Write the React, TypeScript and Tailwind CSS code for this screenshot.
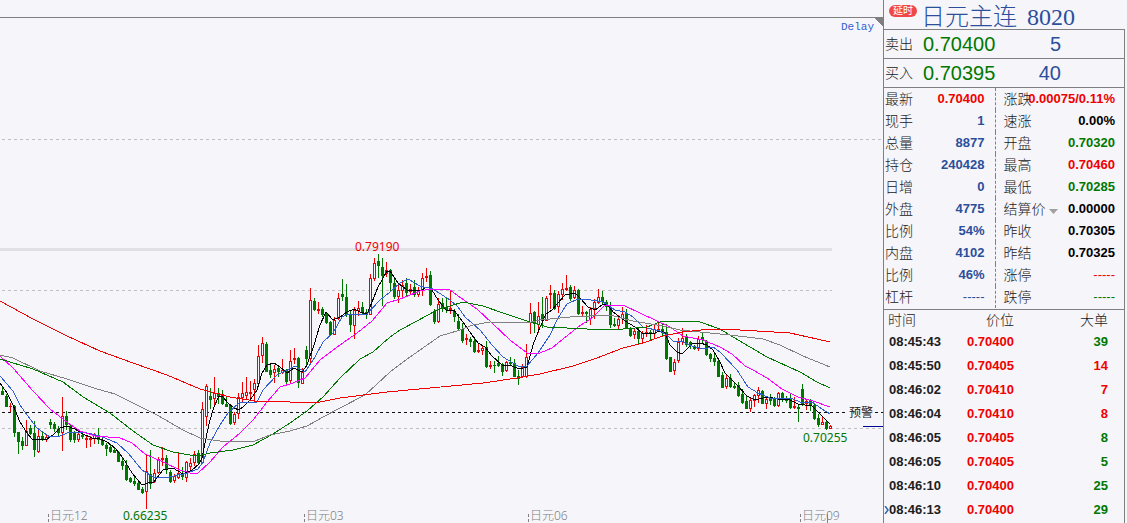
type Point = [number, number]
// x step is implicit: [high, bodyTop, bodyBottom, low, up?]
type Candle = [number, number, number, number, 0 | 1]

const CANDLES: Candle[] = [
  [387, 391, 395, 395, 0], [394, 396, 407, 407, 0], [403, 406, 407, 412, 1], [405, 406, 433, 437, 0],
  [432, 432, 442, 454, 0], [437, 441, 446, 450, 0], [420, 431, 446, 446, 1], [425, 428, 434, 435, 0],
  [421, 433, 450, 457, 0], [430, 436, 452, 453, 1], [432, 436, 439, 441, 0], [434, 437, 440, 442, 1],
  [419, 422, 425, 429, 0], [422, 424, 429, 432, 0], [426, 429, 433, 436, 0], [397, 416, 433, 451, 1],
  [411, 416, 425, 430, 0], [425, 426, 440, 442, 0], [431, 433, 440, 443, 0], [432, 434, 440, 442, 1],
  [433, 435, 437, 439, 0], [435, 438, 440, 448, 1], [436, 438, 440, 447, 1], [433, 435, 439, 444, 1],
  [428, 435, 440, 444, 0], [438, 440, 445, 446, 0], [443, 445, 449, 456, 0], [445, 447, 452, 453, 0],
  [448, 450, 453, 453, 0], [451, 452, 462, 462, 0], [458, 461, 466, 470, 0], [460, 465, 480, 481, 0],
  [477, 478, 482, 483, 0], [475, 481, 484, 486, 0], [481, 483, 490, 490, 0], [487, 489, 493, 494, 0],
  [455, 471, 492, 509, 1], [450, 474, 484, 489, 0], [469, 473, 482, 483, 1], [457, 459, 473, 474, 1],
  [447, 458, 460, 466, 1], [455, 458, 470, 474, 0], [470, 472, 482, 483, 0], [474, 476, 481, 483, 1],
  [452, 473, 478, 479, 1], [467, 473, 477, 480, 0], [461, 462, 478, 482, 1], [458, 463, 467, 472, 1],
  [451, 454, 463, 466, 1], [450, 453, 463, 464, 0], [402, 409, 463, 463, 1], [384, 386, 417, 426, 1],
  [388, 396, 400, 409, 0], [377, 393, 399, 407, 1], [388, 393, 397, 404, 0], [390, 394, 404, 405, 0],
  [397, 404, 407, 407, 0], [404, 405, 424, 425, 0], [412, 414, 423, 425, 1], [393, 397, 414, 419, 1],
  [382, 393, 398, 402, 1], [377, 392, 396, 399, 1], [381, 392, 394, 400, 1], [379, 383, 390, 403, 1],
  [345, 356, 384, 384, 1], [337, 343, 356, 363, 1], [342, 344, 372, 372, 0], [364, 370, 375, 378, 0],
  [365, 369, 373, 383, 1], [365, 368, 372, 377, 0], [359, 370, 373, 374, 1], [369, 370, 382, 384, 0],
  [350, 361, 381, 383, 1], [348, 358, 360, 364, 1], [357, 358, 383, 388, 0], [368, 372, 384, 384, 1],
  [346, 350, 359, 367, 0], [288, 300, 359, 365, 1], [298, 301, 310, 311, 0], [302, 309, 311, 314, 1],
  [307, 309, 315, 317, 0], [312, 314, 323, 324, 0], [321, 322, 335, 335, 0], [317, 320, 335, 335, 1],
  [293, 298, 319, 320, 1], [279, 294, 297, 301, 0], [284, 297, 315, 317, 0], [310, 315, 325, 332, 0],
  [307, 310, 326, 339, 1], [301, 308, 311, 316, 1], [302, 307, 312, 315, 0], [309, 312, 315, 319, 0],
  [274, 278, 315, 315, 1], [258, 263, 279, 281, 1], [254, 261, 266, 278, 0], [258, 267, 276, 306, 0],
  [262, 270, 274, 277, 1], [269, 270, 283, 291, 0], [277, 283, 297, 299, 0], [285, 290, 297, 303, 1],
  [280, 285, 291, 297, 1], [278, 283, 293, 297, 0], [284, 289, 292, 294, 1], [280, 287, 295, 297, 0],
  [287, 291, 295, 297, 1], [273, 278, 290, 296, 1], [268, 276, 278, 282, 1], [271, 275, 305, 306, 0],
  [309, 311, 322, 324, 0], [298, 304, 322, 323, 1], [298, 303, 309, 312, 0], [298, 307, 310, 313, 0],
  [291, 308, 310, 314, 1], [309, 311, 317, 322, 0], [314, 321, 329, 331, 0], [323, 329, 341, 343, 0],
  [334, 338, 340, 345, 1], [337, 339, 342, 347, 0], [337, 341, 352, 353, 0], [343, 350, 352, 353, 1],
  [346, 348, 351, 355, 1], [341, 347, 367, 368, 0], [361, 365, 367, 369, 1], [361, 365, 366, 373, 0],
  [356, 363, 366, 367, 0], [363, 364, 372, 376, 0], [361, 362, 371, 372, 1], [357, 362, 364, 366, 0],
  [359, 363, 377, 377, 0], [370, 376, 379, 385, 0], [364, 367, 377, 378, 1], [344, 357, 377, 378, 1],
  [303, 313, 323, 334, 1], [311, 312, 324, 333, 0], [302, 316, 325, 333, 1], [297, 314, 321, 328, 0],
  [296, 298, 321, 321, 1], [285, 293, 295, 309, 1], [290, 293, 309, 310, 0], [291, 294, 307, 313, 1],
  [283, 289, 295, 300, 1], [275, 288, 290, 291, 1], [285, 287, 299, 301, 0], [286, 290, 298, 299, 1],
  [289, 290, 314, 315, 0], [306, 312, 314, 317, 1], [311, 312, 314, 323, 0], [307, 309, 319, 325, 1],
  [299, 302, 309, 319, 1], [289, 297, 303, 304, 1], [291, 297, 302, 304, 0], [300, 302, 307, 311, 0],
  [302, 307, 325, 328, 0], [318, 324, 326, 327, 0], [315, 319, 326, 329, 1], [307, 314, 319, 324, 1],
  [309, 313, 328, 329, 0], [327, 328, 336, 337, 0], [329, 331, 335, 339, 1], [327, 331, 339, 344, 0],
  [331, 333, 339, 343, 1], [325, 332, 333, 337, 1], [330, 332, 334, 340, 0], [324, 329, 334, 338, 1],
  [321, 329, 330, 331, 1], [323, 329, 333, 336, 0], [324, 332, 359, 360, 0], [357, 357, 372, 372, 0],
  [359, 362, 371, 375, 1], [338, 342, 361, 363, 1], [328, 338, 342, 345, 1], [334, 337, 345, 347, 0],
  [341, 342, 346, 349, 0], [345, 347, 349, 350, 0], [336, 339, 349, 351, 1], [332, 337, 340, 343, 0],
  [340, 341, 355, 356, 0], [353, 354, 359, 362, 0], [354, 358, 362, 366, 0], [360, 361, 377, 377, 0],
  [372, 375, 388, 388, 0], [374, 378, 387, 389, 1], [374, 378, 387, 388, 0], [382, 386, 388, 389, 0],
  [382, 385, 396, 397, 0], [389, 394, 403, 404, 0], [396, 401, 409, 409, 0], [397, 400, 409, 412, 1],
  [394, 395, 401, 407, 1], [387, 390, 396, 403, 1], [390, 391, 404, 404, 0], [397, 399, 404, 409, 1],
  [394, 397, 401, 405, 0], [397, 399, 406, 407, 0], [392, 393, 406, 407, 1], [392, 393, 399, 402, 0],
  [396, 398, 401, 403, 0], [393, 398, 408, 409, 0], [397, 406, 408, 409, 1], [405, 407, 409, 422, 0],
  [384, 389, 405, 406, 0], [399, 401, 404, 410, 1], [399, 401, 406, 411, 0], [403, 405, 419, 420, 0],
  [414, 418, 425, 427, 0], [417, 422, 425, 425, 1], [421, 422, 429, 430, 0], [425, 426, 429, 429, 1],
]

const AVERAGES: { name: string; color: string; points: Point[] }[] = [
  {
    name: 'ma5',
    color: '#000000',
    points: [
      [0, 383], [7, 393], [13, 405], [20, 422], [27, 433], [32, 439], [38, 439], [47, 439], [53, 435], [60, 428],
      [67, 426], [75, 429], [83, 434], [92, 438], [98, 438], [107, 442], [115, 448], [123, 458], [132, 473],
      [142, 485], [148, 483], [154, 482], [163, 470], [173, 468], [183, 474], [192, 470], [199, 464], [202, 458],
      [207, 433], [210, 420], [214, 407], [219, 396], [223, 397], [228, 403], [234, 408], [239, 410], [243, 407],
      [250, 400], [257, 390], [262, 373], [267, 365], [274, 363], [280, 367], [287, 373], [294, 368], [302, 372],
      [307, 365], [314, 345], [320, 325], [326, 312], [333, 320], [340, 317], [347, 312], [354, 309], [360, 312],
      [367, 314], [370, 307], [378, 287], [387, 271], [390, 271], [398, 283], [407, 290], [422, 290], [427, 287],
      [432, 290], [438, 300], [446, 310], [454, 310], [463, 322], [472, 335], [478, 343], [485, 347], [492, 356],
      [502, 365], [512, 366], [519, 369], [527, 367], [533, 345], [540, 327], [546, 314], [552, 310], [558, 303],
      [565, 295], [575, 293], [580, 298], [588, 307], [595, 310], [602, 305], [607, 304], [613, 312], [625, 321],
      [635, 327], [642, 333], [652, 334], [660, 331], [665, 333], [670, 345], [677, 352], [682, 354], [692, 344],
      [700, 343], [707, 345], [713, 350], [720, 362], [725, 373], [737, 385], [747, 396], [755, 400], [767, 397],
      [778, 399], [790, 400], [798, 404], [812, 406], [820, 414], [830, 424],
    ],
  },
  {
    name: 'ma10',
    color: '#2f5fd0',
    points: [
      [0, 376], [13, 391], [20, 405], [27, 415], [37, 428], [50, 437], [60, 436], [67, 433], [83, 432], [100, 436],
      [117, 443], [128, 453], [142, 470], [155, 478], [170, 477], [187, 473], [198, 469], [203, 462], [210, 443],
      [220, 425], [228, 413], [240, 402], [257, 402], [263, 390], [277, 375], [295, 366], [305, 372], [315, 357],
      [323, 342], [333, 333], [342, 317], [348, 314], [367, 314], [380, 300], [390, 292], [400, 283], [408, 279],
      [420, 286], [433, 289], [450, 300], [458, 307], [465, 317], [480, 330], [492, 345], [503, 357], [518, 366],
      [527, 366], [538, 353], [550, 335], [558, 318], [567, 304], [578, 299], [585, 299], [603, 302], [615, 310],
      [625, 312], [633, 317], [643, 327], [660, 331], [667, 335], [673, 341], [683, 342], [692, 346], [703, 349],
      [713, 347], [720, 352], [737, 370], [748, 387], [758, 393], [770, 398], [793, 399], [800, 402], [812, 402],
      [822, 409], [830, 414],
    ],
  },
  {
    name: 'ma20',
    color: '#ff00ff',
    points: [
      [0, 356], [13, 368], [33, 391], [50, 409], [68, 423], [80, 431], [95, 436], [120, 438], [132, 443], [145, 454],
      [163, 462], [180, 470], [190, 473], [198, 473], [210, 462], [223, 447], [240, 433], [253, 420], [267, 402],
      [280, 387], [293, 383], [305, 378], [320, 360], [340, 345], [357, 333], [372, 321], [387, 303], [400, 299],
      [420, 291], [430, 289], [449, 289], [458, 296], [477, 309], [493, 324], [510, 340], [527, 353], [540, 353],
      [552, 348], [563, 339], [578, 327], [592, 318], [605, 305], [625, 306], [640, 313], [657, 321], [670, 327],
      [683, 336], [703, 340], [720, 347], [732, 354], [745, 366], [753, 370], [767, 378], [782, 389], [798, 397],
      [813, 401], [830, 407],
    ],
  },
  {
    name: 'ma40',
    color: '#007800',
    points: [
      [0, 359], [33, 369], [63, 382], [83, 397], [110, 413], [133, 431], [153, 445], [173, 452], [190, 455],
      [202, 455], [210, 453], [233, 450], [253, 445], [273, 434], [290, 423], [307, 411], [323, 397], [340, 378],
      [360, 359], [373, 352], [390, 337], [400, 330], [417, 321], [437, 310], [463, 302], [483, 306], [503, 313],
      [527, 321], [547, 327], [587, 329], [623, 329], [647, 327], [660, 322], [677, 321], [700, 322], [720, 329],
      [733, 337], [750, 347], [767, 357], [800, 372], [817, 382], [830, 388],
    ],
  },
  {
    name: 'ma60',
    color: '#808080',
    points: [
      [0, 355], [13, 358], [40, 371], [67, 379], [97, 389], [115, 394], [133, 403], [157, 415], [183, 430],
      [200, 438], [220, 441], [240, 442], [255, 441], [270, 435], [290, 431], [307, 426], [325, 416], [340, 408],
      [365, 395], [377, 384], [390, 372], [410, 357], [440, 336], [457, 331], [473, 325], [490, 322], [527, 323],
      [540, 320], [570, 317], [610, 315], [633, 321], [663, 326], [680, 330], [700, 332], [730, 335], [763, 339],
      [780, 345], [803, 356], [830, 367],
    ],
  },
  {
    name: 'ma120',
    color: '#f00000',
    points: [
      [0, 301], [33, 319], [67, 336], [100, 351], [133, 363], [167, 375], [200, 389], [230, 397], [255, 401],
      [290, 402], [320, 402], [340, 398], [387, 392], [430, 388], [483, 383], [517, 378], [540, 374], [573, 366],
      [597, 358], [623, 348], [643, 343], [663, 336], [683, 332], [710, 329], [723, 329], [757, 331], [790, 333],
      [817, 339], [830, 342],
    ],
  },
]

const MONTHS = [
  { x: 48, label: '日元12' },
  { x: 304, label: '日元03' },
  { x: 528, label: '日元06' },
  { x: 800, label: '日元09' },
]

const RED = 'text-[#f00000]'
const GREEN = 'text-[#007800]'
const BLUE = 'text-[#2b4f9b]'
const BLACK = 'text-black'

const QUOTE_ROWS = [
  ['最新', '0.70400', RED, '涨跌', '0.00075/0.11%', RED],
  ['现手', '1', BLUE, '速涨', '0.00%', BLACK],
  ['总量', '8877', BLUE, '开盘', '0.70320', GREEN],
  ['持仓', '240428', BLUE, '最高', '0.70460', RED],
  ['日增', '0', BLUE, '最低', '0.70285', GREEN],
  ['外盘', '4775', BLUE, '结算价', '0.00000', BLACK],
  ['比例', '54%', BLUE, '昨收', '0.70305', BLACK],
  ['内盘', '4102', BLUE, '昨结', '0.70325', BLACK],
  ['比例', '46%', BLUE, '涨停', '-----', RED],
  ['杠杆', '-----', BLUE, '跌停', '-----', GREEN],
]

const TRADES = [
  ['08:45:43', '0.70400', '39', GREEN],
  ['08:45:50', '0.70405', '14', RED],
  ['08:46:02', '0.70410', '7', RED],
  ['08:46:04', '0.70410', '8', RED],
  ['08:46:05', '0.70405', '8', GREEN],
  ['08:46:05', '0.70405', '5', GREEN],
  ['08:46:10', '0.70400', '25', GREEN],
  ['08:46:13', '0.70400', '29', GREEN],
]

// empty quotes are thin dashes, real ones are bold
const weightOf = (value: string) => (value.startsWith('-') ? 'font-normal' : 'font-bold')

function CandleMark({ index, candle }: { index: number; candle: Candle }) {
  const [high, top, bottom, low, up] = candle
  const x = index * 4 + 2
  return (
    <g fill={up ? '#f00000' : '#007800'}>
      <rect x={x} y={high} width="1" height={low - high} />
      <rect x={x - 1} y={top} width="3" height={bottom - top} />
      {up === 1 && bottom - top > 2 && (
        <rect x={x} y={top + 1} width="1" height={bottom - top - 2} fill="#f6f5fa" />
      )}
    </g>
  )
}

function PriceChart() {
  return (
    <svg viewBox="0 0 883 523" className="block h-auto w-full" role="img" aria-label="日元主连 K线">
      <g shapeRendering="crispEdges" fill="none">
        <path d="M0 17.5H883" stroke="#808080" />
        <path d="M874 18H883V27Z" fill="#808080" />
        <path d="M0 249.5H832" stroke="#e0e0e4" strokeWidth="3" />
        <path d="M2 139.5H883M2 290.5H832M2 428.5H883" stroke="#c0c0c0" strokeDasharray="3 3" />
        <path d="M2 412.5H847M875 412.5H883" stroke="#101010" strokeDasharray="3 3" />
        <path d="M863 426.5H883" stroke="#000090" />
        {CANDLES.map((candle, i) => (
          <CandleMark key={i} index={i} candle={candle} />
        ))}
        {AVERAGES.map((line) => (
          <polyline key={line.name} points={line.points.map((p) => p.join(',')).join(' ')} stroke={line.color} />
        ))}
        {MONTHS.map((m) => (
          <path key={m.x} d={`M${m.x + 0.5} 514V523`} stroke="#808080" strokeDasharray="3 2" />
        ))}
        <path d="M827.5 514V523" stroke="#808080" />
      </g>
      <g className="font-['Noto_Sans','Noto_Sans_CJK_SC',sans-serif] text-[12px]">
        <text x="355" y="251" fill="#f00000">0.79190</text>
        <text x="123" y="520" fill="#007800">0.66235</text>
        <text x="803" y="442" fill="#007800">0.70255</text>
        {MONTHS.map((m) => (
          <text key={m.x} x={m.x + 2} y="520" fill="#808080" className="font-light">{m.label}</text>
        ))}
        <text x="849" y="417" fill="#202020">预警</text>
      </g>
      <text x="841" y="30" fill="#2f5fd0" className="font-['Liberation_Mono',monospace] text-[11px]">Delay</text>
    </svg>
  )
}

function BookRow({ label, price, size }: { label: string; price: string; size: string }) {
  return (
    <div className="box-content flex h-7 items-center border-b border-[#808080] pl-px">
      <span className="w-[38px] text-sm font-light">{label}</span>
      <span className="w-20 text-xl text-[#007800]">{price}</span>
      <span className="w-[58px] text-right text-xl text-[#2b4f9b]">{size}</span>
    </div>
  )
}

function QuoteTable() {
  return (
    <div className="pb-px">
      <table className="w-full table-fixed text-[13px] leading-5">
        <colgroup>
          <col className="w-[41px]" />
          <col className="w-[70px]" />
          <col className="w-[67px]" />
          <col />
        </colgroup>
        <tbody>
          {QUOTE_ROWS.map(([label, value, tone, label2, value2, tone2]) => (
            <tr key={label2} className="h-[22px]">
              <th scope="row" className="p-0 pl-px text-left text-sm leading-5 font-light whitespace-nowrap">{label}</th>
              <td className={`border-r border-dashed border-[#808080] p-0 pr-2.5 text-right ${weightOf(value)} ${tone}`}>
                {value}
              </td>
              <th scope="row" className="p-0 pl-2 text-left text-sm leading-5 font-light whitespace-nowrap">
                {label2 === '结算价' ? (
                  <button type="button" className="flex items-center gap-[3px]">
                    {label2}
                    <svg viewBox="0 0 9 5" className="mt-1 h-[5px] w-[9px] shrink-0" aria-hidden="true">
                      <path d="M0 0H9L4.5 5Z" fill="#a0a0a0" />
                    </svg>
                  </button>
                ) : (
                  label2
                )}
              </th>
              <td className={`p-0 pr-[9px] ${weightOf(value2)} ${tone2}`}>
                <div className="flex justify-end">{value2}</div>
              </td>
            </tr>
          ))}
        </tbody>
      </table>
    </div>
  )
}

function TradeTable() {
  return (
    <table className="w-full table-fixed border-t border-[#808080] text-[13px] leading-5 font-bold">
      <colgroup>
        <col className="w-[65px]" />
        <col className="w-[65px]" />
        <col />
      </colgroup>
      <thead>
        <tr className="h-5 text-sm leading-5">
          <th scope="col" className="p-0 pl-1 text-left font-light">时间</th>
          <th scope="col" className="p-0 text-right font-light">价位</th>
          <th scope="col" className="p-0 pr-4 text-right font-light">大单</th>
        </tr>
      </thead>
      <tbody>
        {TRADES.map(([time, price, size, tone], i) => (
          <tr key={i} className="h-6">
            <td className="relative p-0 pl-[5px]">
              {i === TRADES.length - 1 && (
                <svg viewBox="0 0 5 8" className="absolute top-2 left-0 h-2 w-[5px]" aria-hidden="true">
                  <path d="M1 0L4 4L1 8" fill="none" stroke="#2b6cb0" strokeWidth="1.5" />
                </svg>
              )}
              {time}
            </td>
            <td className="p-0 text-right text-[#f00000]">{price}</td>
            <td className={`p-0 pr-4 text-right ${tone}`}>{size}</td>
          </tr>
        ))}
      </tbody>
    </table>
  )
}

export default function App() {
  return (
    <main className="flex min-h-screen items-stretch overflow-hidden bg-[#f6f5fa] font-['Liberation_Sans','Noto_Sans_CJK_SC',sans-serif] text-[#202020]">
      <section className="min-w-0 flex-1">
        <PriceChart />
      </section>
      <aside className="flex w-61 shrink-0 flex-col border-l border-[#808080] pr-0.5">
        <header className="flex h-[29px] items-center pl-[5px]">
          <span className="mb-2 flex h-3 w-7 items-center justify-center rounded-full bg-[#f04848] text-[10px] text-white">
            延时
          </span>
          <h1 className="flex gap-2.5 pt-1 pl-1 text-2xl leading-7 font-light text-[#2b4f9b]">
            <span>日元主连</span>
            <span className="font-['Liberation_Serif',serif]">8020</span>
          </h1>
        </header>
        <div className="flex-1 border-t border-r border-[#808080]">
          <BookRow label="卖出" price="0.70400" size="5" />
          <BookRow label="买入" price="0.70395" size="40" />
          <QuoteTable />
          <TradeTable />
        </div>
      </aside>
    </main>
  )
}
